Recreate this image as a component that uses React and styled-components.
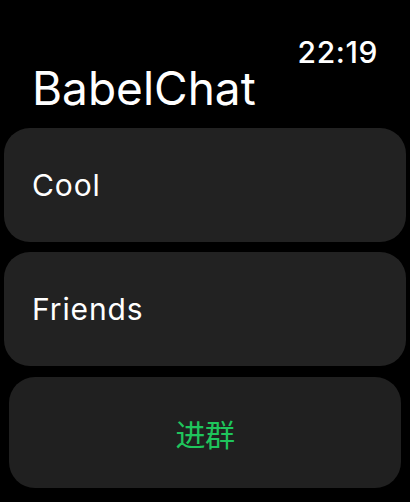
import React from 'react'
import styled, { createGlobalStyle } from 'styled-components'

const Global = createGlobalStyle`
  html, body {
    margin: 0;
    padding: 0;
    background: #000;
    height: 502px;
    overflow: hidden;
  }
  body {
    font-family: Inter, "Noto Sans", "Noto Sans CJK SC", sans-serif;
    color: #fff;
  }
`

const Screen = styled.div`
  width: 410px;
  height: 502px;
  background: #000;
  display: flex;
  flex-direction: column;
  overflow: hidden;
  & > * {
    flex-shrink: 0;
  }
`

const Header = styled.div`
  display: flex;
  justify-content: space-between;
  align-items: flex-start;
  padding: 0 32px 0 32px;
  height: 128px;
`

const Title = styled.h1`
  margin: 60px 0 0 0;
  font-size: 46px;
  font-weight: 400;
  line-height: 56px;
  letter-spacing: 0px;
`

const Clock = styled.span`
  margin-top: 34px;
  font-size: 30px;
  font-weight: 500;
  line-height: 36px;
  letter-spacing: 0.6px;
`

const List = styled.div`
  display: flex;
  flex-direction: column;
  gap: 10px;
  padding: 0 4px;
`

const Card = styled.div`
  height: 114px;
  border-radius: 26px;
  background: #222222;
  display: flex;
  align-items: center;
  padding: 0 28px;
  font-size: 30px;
  font-weight: 400;
  letter-spacing: 0.9px;
`

const JoinButton = styled.button`
  margin: 1px 5px 0 5px;
  height: 111px;
  border: none;
  border-radius: 26px;
  background: #202020;
  color: #1fc55c;
  font-family: "Noto Sans CJK SC", sans-serif;
  font-size: 30px;
  letter-spacing: -0.5px;
  display: flex;
  align-items: center;
  justify-content: center;
`

const NextPill = styled.div`
  align-self: center;
  margin-top: 14px;
  width: 94px;
  height: 20px;
  border-radius: 10px;
  background: #1c1c1c;
`

const groups = ['Cool', 'Friends']

export default function App() {
  return (
    <Screen>
      <Global />
      <Header>
        <Title>BabelChat</Title>
        <Clock>22:19</Clock>
      </Header>
      <List>
        {groups.map(g => (
          <Card key={g}>{g}</Card>
        ))}
        <JoinButton>进群</JoinButton>
      </List>
      <NextPill />
    </Screen>
  )
}
